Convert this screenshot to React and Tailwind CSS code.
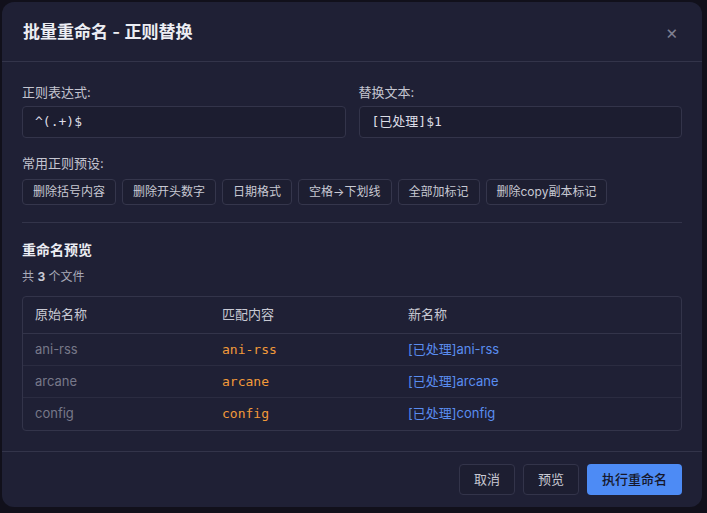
const presets = [
  "删除括号内容",
  "删除开头数字",
  "日期格式",
  "空格→下划线",
  "全部加标记",
  "删除copy副本标记",
];

const rows = [
  { name: "ani-rss", match: "ani-rss", next: "[已处理]ani-rss" },
  { name: "arcane", match: "arcane", next: "[已处理]arcane" },
  { name: "config", match: "config", next: "[已处理]config" },
];

const sans = "font-['Inter','Noto_Sans_CJK_SC',sans-serif]";
const mono = "font-['DejaVu_Sans_Mono','Noto_Sans_CJK_SC',monospace]";

export default function App() {
  return (
    <div className={`h-[513px] w-[707px] overflow-hidden bg-[#11101b] pl-[2px] pt-[2px] ${sans}`}>
      <div className="flex h-[505px] w-[700px] flex-col rounded-xl bg-[#1f2035]">
        {/* Header */}
        <div className="flex h-[60px] shrink-0 items-center justify-between border-b border-[#33344a] pl-[21px] pr-[24px]">
          <h2 className="pt-[2px] text-[17px] font-semibold text-[#ecedf3]">
            批量重命名 - 正则替换
          </h2>
          <span className="pt-[2px] text-[19px] leading-none text-[#7d7e90]">×</span>
        </div>

        {/* Body */}
        <div className="flex-1 px-5 pt-5">
          <div className="grid grid-cols-2 gap-[13px]">
            <div>
              <p className="mb-1 text-[13px] leading-5 text-[#c4c5d0]">正则表达式:</p>
              <div className={`flex h-8 items-center rounded border border-[#33344a] bg-[#1c1d30] px-3 text-[13px] text-[#dcdde6] ${mono}`}>
                ^(.+)$
              </div>
            </div>
            <div>
              <p className="mb-1 text-[13px] leading-5 text-[#c4c5d0]">替换文本:</p>
              <div className={`flex h-8 items-center rounded border border-[#33344a] bg-[#1c1d30] px-3 text-[13px] text-[#dcdde6] ${mono}`}>
                [已处理]$1
              </div>
            </div>
          </div>

          <p className="mb-[6px] mt-[15px] text-[13px] leading-5 text-[#c4c5d0]">常用正则预设:</p>
          <div className="flex gap-[6px]">
            {presets.map((p) => (
              <span
                key={p}
                className="flex h-[26px] items-center rounded border border-[#35364c] bg-[#1d1e31] px-[10px] text-[12px] text-[#c8c9d3]"
              >
                {p}
              </span>
            ))}
          </div>

          <div className="mt-[17px] h-px bg-[#33344a]" />

          <h3 className="mt-[17px] text-[14px] font-semibold leading-5 text-[#ecedf3]">重命名预览</h3>
          <p className="mt-[9px] text-[12px] leading-4 text-[#a9aab8]">
            共 <span className="font-bold text-[#c8c9d3]">3</span> 个文件
          </p>

          {/* Table */}
          <div className="mt-[11px] overflow-hidden rounded border border-[#33344a]">
            <div className="grid h-[37px] grid-cols-[187px_186px_1fr] items-center border-b border-[#33344a] text-[13px] text-[#c8c9d3]">
              <span className="px-3">原始名称</span>
              <span className="px-3">匹配内容</span>
              <span className="px-3">新名称</span>
            </div>
            {rows.map((r, i) => (
              <div
                key={r.name}
                className={`grid h-[32px] grid-cols-[187px_186px_1fr] items-center text-[13px] ${
                  i < rows.length - 1 ? "border-b border-[#2b2c41]" : ""
                }`}
              >
                <span className="px-3 text-[#777889]">{r.name}</span>
                <span className={`px-3 text-[#f29a3a] ${mono}`}>{r.match}</span>
                <span className="px-3 text-[#5a8df0]">{r.next}</span>
              </div>
            ))}
          </div>
        </div>

        {/* Footer */}
        <div className="flex h-[56px] shrink-0 justify-end gap-2 border-t border-[#33344a] px-5 pt-[12px]">
          <button className="h-[31px] w-[56px] rounded border border-[#33344a] bg-[#1d1e31] text-[13px] text-[#c8c9d3]">
            取消
          </button>
          <button className="h-[31px] w-[56px] rounded border border-[#33344a] bg-[#1d1e31] text-[13px] text-[#c8c9d3]">
            预览
          </button>
          <button className="h-[31px] w-[95px] rounded bg-[#4d8bf5] text-[13px] font-medium text-[#16172a]">
            执行重命名
          </button>
        </div>
      </div>
    </div>
  );
}
